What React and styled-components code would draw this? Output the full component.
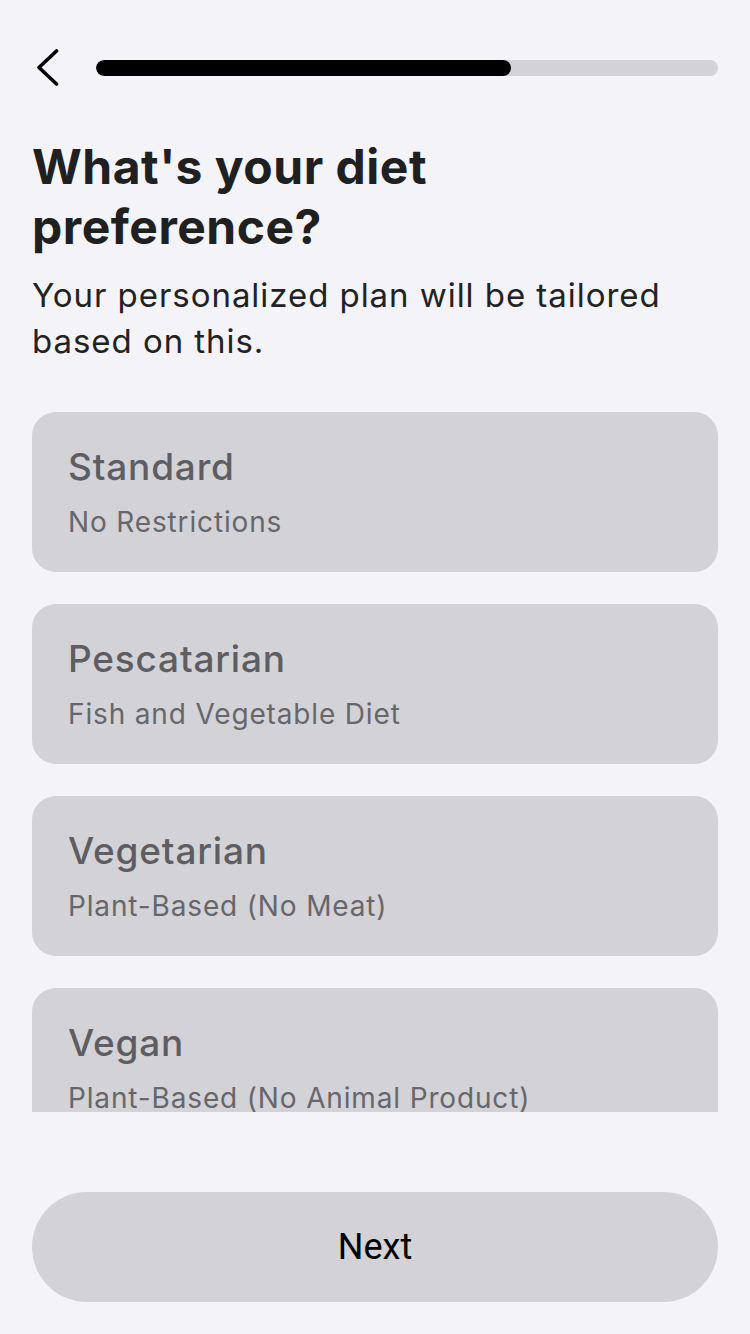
import React from "react";
import styled, { createGlobalStyle } from "styled-components";

const Global = createGlobalStyle`
  html, body { margin: 0; padding: 0; background: #f3f3f8; }
  body { font-family: Inter, "Noto Sans", sans-serif; }
  * { box-sizing: border-box; }
`;

const Page = styled.div`
  width: 750px;
  height: 1334px;
  padding: 0 32px 32px;
  display: flex;
  flex-direction: column;
  background: #f3f3f8;
  overflow: hidden;
`;

const Header = styled.div`
  margin-top: 48px;
  height: 40px;
  display: flex;
  align-items: center;
  gap: 37px;
`;

const BackButton = styled.button`
  margin-left: 3px;
  width: 24px;
  height: 40px;
  padding: 0;
  border: none;
  background: none;
  display: flex;
`;

const Track = styled.div`
  flex: 1;
  height: 16px;
  border-radius: 8px;
  background: #d3d2d7;
  overflow: hidden;
`;

const Fill = styled.div`
  height: 100%;
  border-radius: 8px;
  background: #000;
`;

const Title = styled.h1`
  margin: 49px 0 0;
  font-family: Inter, sans-serif;
  font-weight: 700;
  font-size: 48px;
  line-height: 60px;
  color: #202020;
  letter-spacing: 0.5px;
`;

const Subtitle = styled.p`
  margin: 15px 0 0;
  font-family: Inter, sans-serif;
  font-weight: 400;
  font-size: 33px;
  line-height: 46px;
  color: #222;
  letter-spacing: 0.95px;
`;

const List = styled.div`
  margin-top: 48px;
  height: 700px;
  overflow: hidden;
  display: flex;
  flex-direction: column;
  gap: 32px;
  flex-shrink: 0;
`;

const Card = styled.div`
  flex-shrink: 0;
  height: 160px;
  border-radius: 24px;
  background: #d3d2d7;
  padding: 33px 36px 0;
  display: flex;
  flex-direction: column;
`;

const CardTitle = styled.div`
  font-family: Inter, sans-serif;
  font-weight: 500;
  font-size: 37px;
  line-height: 44px;
  color: #5e5e62;
  letter-spacing: 0.8px;
`;

const CardSub = styled.div`
  margin-top: 17px;
  font-family: Inter, sans-serif;
  font-weight: 400;
  font-size: 28px;
  line-height: 32px;
  color: #67676b;
  letter-spacing: 0.85px;
  white-space: nowrap;
`;

const NextButton = styled.button`
  margin-top: auto;
  height: 110px;
  border: none;
  border-radius: 55px;
  background: #d3d2d7;
  font-family: Roboto, sans-serif;
  font-size: 36px;
  font-weight: 400;
  color: #000;
`;

const options = [
  ["Standard", "No Restrictions"],
  ["Pescatarian", "Fish and Vegetable Diet"],
  ["Vegetarian", "Plant-Based (No Meat)"],
  ["Vegan", "Plant-Based (No Animal Product)"],
];

export default function App() {
  const progress = (511 - 96) / (718 - 96);
  return (
    <>
      <Global />
      <Page>
        <Header>
          <BackButton aria-label="Back">
            <svg width="24" height="40" viewBox="0 0 24 40">
              <path d="M21.5 3 L4 19.5 L21.5 36" fill="none" stroke="#000" strokeWidth="3.6" strokeLinecap="round" strokeLinejoin="round" />
            </svg>
          </BackButton>
          <Track>
            <Fill style={{ width: `${progress * 100}%` }} />
          </Track>
        </Header>
        <Title>What's your diet<br />preference?</Title>
        <Subtitle>Your personalized plan will be tailored based on this.</Subtitle>
        <List>
          {options.map(([t, s]) => (
            <Card key={t}>
              <CardTitle>{t}</CardTitle>
              <CardSub>{s}</CardSub>
            </Card>
          ))}
        </List>
        <NextButton>Next</NextButton>
      </Page>
    </>
  );
}
